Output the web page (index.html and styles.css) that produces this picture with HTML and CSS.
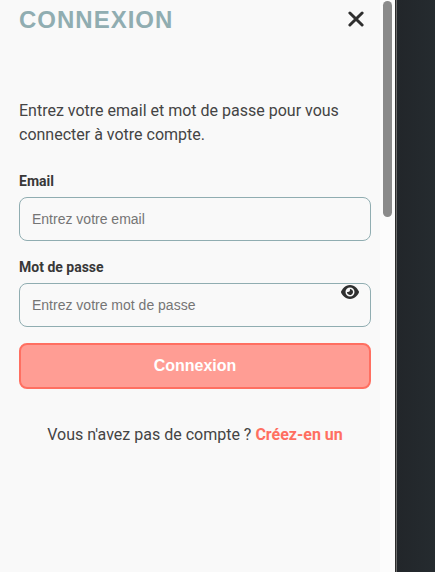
FILE: index.html
```html
<!DOCTYPE html>
<html lang="fr">
<head>
<meta charset="utf-8">
<meta name="viewport" content="width=device-width, initial-scale=1">
<title>Connexion</title>
<link rel="stylesheet" href="styles.css">
</head>
<body>
<div class="page">
  <main class="drawer">
    <header class="drawer-header">
      <h1 class="title">CONNEXION</h1>
      <button class="icon-button" type="button" aria-label="Fermer">
        <svg width="16" height="18" viewBox="0 0 16 18" fill="none" stroke="currentColor" stroke-width="3" stroke-linecap="round"><path d="M1.900 2l12.200 12M14.100 2L1.900 14"/></svg>
      </button>
    </header>
    <p class="intro">Entrez votre email et mot de passe pour vous connecter à votre compte.</p>
    <form class="form">
      <div class="field">
        <label class="label" for="email">Email</label>
        <input class="input" id="email" type="email" placeholder="Entrez votre email">
      </div>
      <div class="field">
        <label class="label" for="password">Mot de passe</label>
        <div class="password">
          <input class="input" id="password" type="password" placeholder="Entrez votre mot de passe">
          <button class="icon-button reveal" type="button" aria-label="Afficher le mot de passe">
            <svg width="18" height="16" viewBox="0 0 576 512" fill="currentColor"><path d="M288 32c-80.800 0-145.500 36.800-192.600 80.600C48.600 156 17.300 208 2.500 243.700c-3.300 7.900-3.300 16.700 0 24.600C17.300 304 48.600 356 95.400 399.400C142.500 443.200 207.200 480 288 480s145.500-36.800 192.600-80.600c46.800-43.500 78.100-95.400 93-131.100c3.300-7.900 3.300-16.700 0-24.600c-14.900-35.700-46.200-87.700-93-131.100C433.500 68.800 368.800 32 288 32zM144 256a144 144 0 1 1 288 0a144 144 0 1 1-288 0zm144-64c0 35.300-28.700 64-64 64c-7.100 0-13.900-1.200-20.300-3.300c-5.500-1.800-11.900 1.600-11.700 7.400c.3 6.900 1.300 13.800 3.200 20.700c13.700 51.200 66.400 81.600 117.600 67.900s81.600-66.400 67.900-117.600c-11.100-41.500-47.800-69.400-88.600-71.100c-5.800-.2-9.200 6.100-7.400 11.700c2.100 6.400 3.300 13.200 3.300 20.300z"/></svg>
          </button>
        </div>
      </div>
      <button class="submit" type="submit">Connexion</button>
    </form>
    <p class="signup">Vous n'avez pas de compte ? <a class="link" href="#">Créez-en un</a></p>
  </main>
  <div class="track"><div class="thumb"></div></div>
  <div class="backdrop"></div>
</div>
</body>
</html>
```

FILE: styles.css
```css
* {
  box-sizing: border-box;
}

body {
  margin: 0;
  color: #444;
  font: 16px/24px Roboto, sans-serif;
}

.page {
  display: flex;
  min-height: 100vh;
}

.drawer {
  flex: 1;
  padding: 5px 9px 16px 19px;
  background: #f9f9f9;
}

.drawer-header {
  display: flex;
  align-items: center;
  justify-content: space-between;
  height: 30px;
}

.title {
  margin: 0;
  color: #90adb1;
  font: bold 24px/30px "Liberation Sans", Arial, sans-serif;
  letter-spacing: 1px;
}

.icon-button {
  display: flex;
  padding: 0;
  border: 0;
  background: none;
  color: #2f2f2f;
  cursor: pointer;
}

.drawer-header .icon-button {
  margin-right: 7px;
}

.intro {
  margin: 64px 0 24px;
}

.form,
.field {
  display: flex;
  flex-direction: column;
}

.form {
  gap: 16px;
}

.field {
  gap: 6px;
}

.label {
  color: #383838;
  font-size: 14px;
  font-weight: 700;
  line-height: 20px;
}

.input {
  display: block;
  width: 100%;
  height: 44px;
  padding: 0 12px;
  border: 1px solid #90adb1;
  border-radius: 8px;
  background: transparent;
  color: #333;
  font: 14px "Liberation Sans", Arial, sans-serif;
}

.input::placeholder {
  color: #757575;
}

.password {
  position: relative;
}

.reveal {
  position: absolute;
  top: 1px;
  right: 12px;
}

.submit {
  height: 46px;
  border: 2px solid #ff6f61;
  border-radius: 8px;
  background: #ff9d94;
  color: #fff;
  font: bold 16px "Liberation Sans", Arial, sans-serif;
  cursor: pointer;
}

.signup {
  margin: 34px 0 0;
  text-align: center;
}

.link {
  color: #ff6f61;
  font-weight: 700;
  text-decoration: none;
}

.track {
  width: 15px;
  padding: 1px 3px;
  background: #fcfcfc;
}

.thumb {
  height: 216px;
  border-radius: 5px;
  background: #8b8b8b;
}

.backdrop {
  width: 40px;
  border-left: 1px solid #2c2c2c;
  background: linear-gradient(90deg, #6a6a6a 1px, #22262a 1px, #252b2f 100%);
}
```
